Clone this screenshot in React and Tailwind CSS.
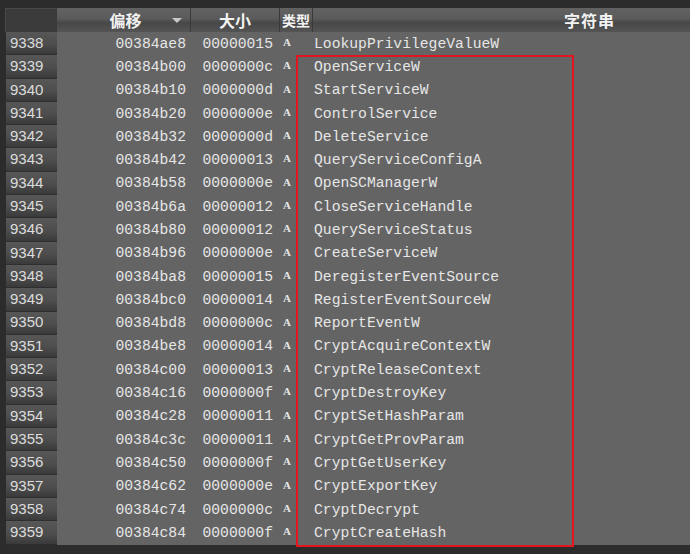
import React from 'react';

const rows = [
	['9338', '00384ae8', '00000015', 'LookupPrivilegeValueW'],
	['9339', '00384b00', '0000000c', 'OpenServiceW'],
	['9340', '00384b10', '0000000d', 'StartServiceW'],
	['9341', '00384b20', '0000000e', 'ControlService'],
	['9342', '00384b32', '0000000d', 'DeleteService'],
	['9343', '00384b42', '00000013', 'QueryServiceConfigA'],
	['9344', '00384b58', '0000000e', 'OpenSCManagerW'],
	['9345', '00384b6a', '00000012', 'CloseServiceHandle'],
	['9346', '00384b80', '00000012', 'QueryServiceStatus'],
	['9347', '00384b96', '0000000e', 'CreateServiceW'],
	['9348', '00384ba8', '00000015', 'DeregisterEventSource'],
	['9349', '00384bc0', '00000014', 'RegisterEventSourceW'],
	['9350', '00384bd8', '0000000c', 'ReportEventW'],
	['9351', '00384be8', '00000014', 'CryptAcquireContextW'],
	['9352', '00384c00', '00000013', 'CryptReleaseContext'],
	['9353', '00384c16', '0000000f', 'CryptDestroyKey'],
	['9354', '00384c28', '00000011', 'CryptSetHashParam'],
	['9355', '00384c3c', '00000011', 'CryptGetProvParam'],
	['9356', '00384c50', '0000000f', 'CryptGetUserKey'],
	['9357', '00384c62', '0000000e', 'CryptExportKey'],
	['9358', '00384c74', '0000000c', 'CryptDecrypt'],
	['9359', '00384c84', '0000000f', 'CryptCreateHash'],
];

const headerBg =
	'bg-[linear-gradient(to_bottom,#626262_0%,#5a5a5a_45%,#474747_62%,#545454_100%)]';

const StringsTable = () => {
	return (
		<div className="relative w-[690px] h-[554px] overflow-hidden bg-[#2c2c2c] pt-[8px] pl-[5px] font-['Liberation_Mono',monospace]">
			{/* header */}
			<div className="flex h-[24px] text-[#f2f2f2] font-bold font-['Noto_Sans_CJK_SC',sans-serif]">
				<div className="w-[51px] bg-[#3b3b3b] border-t border-l border-[#4a4a4a]" />
				<div className={`relative w-[134px] flex items-center justify-center border-l border-[#3a3a3a] text-[16px] ${headerBg}`}>
					<span className="ml-[4px]">偏移</span>
					<span className="absolute right-[8px] top-[10px] w-0 h-0 border-l-[5px] border-r-[5px] border-t-[5px] border-l-transparent border-r-transparent border-t-[#c8c8c8]" />
				</div>
				<div className={`w-[89px] flex items-center justify-center border-l border-[#3a3a3a] text-[16px] ${headerBg}`}>
					大小
				</div>
				<div className={`w-[33px] flex items-center justify-center border-l border-[#3a3a3a] text-[14px] ${headerBg}`}>
					类型
				</div>
				<div className={`flex-1 flex items-center border-l border-[#3a3a3a] pl-[251px] text-[16px] tracking-[1px] ${headerBg}`}>
					字符串
				</div>
			</div>

			{/* body */}
			<div className="flex">
				<div className="w-[52px] pl-[1px]">
					{rows.map(([num]) => (
						<div
							key={num}
							className="h-[23.3px] flex items-center pl-[4px] border-b border-[#2e2e2e] bg-[linear-gradient(to_bottom,#575757_0%,#4d4d4d_55%,#3a3a3a_100%)] text-[#dcdcdc] text-[15px] font-['Liberation_Sans',sans-serif]"
						>
							{num}
						</div>
					))}
				</div>
				<div className="flex-1 bg-[#646464] text-[#e6e6e6] text-[14.7px]">
					{rows.map(([num, offset, size, str]) => (
						<div key={num} className="h-[23.3px] flex items-center">
							<div className="w-[133px] text-right pr-[4px]">{offset}</div>
							<div className="w-[89px] text-right pr-[6px]">{size}</div>
							<div className="w-[35px] self-start pt-[2px] pl-[4px] text-[11px] font-bold font-['Liberation_Serif',serif]">
								A
							</div>
							<div className="flex-1 whitespace-nowrap">{str}</div>
						</div>
					))}
				</div>
			</div>

			{/* annotation box */}
			<div className="absolute left-[296px] top-[55px] w-[278px] h-[492px] border-2 border-[#e3161f]" />
		</div>
	);
};

export default function App() {
	return <StringsTable />;
}
